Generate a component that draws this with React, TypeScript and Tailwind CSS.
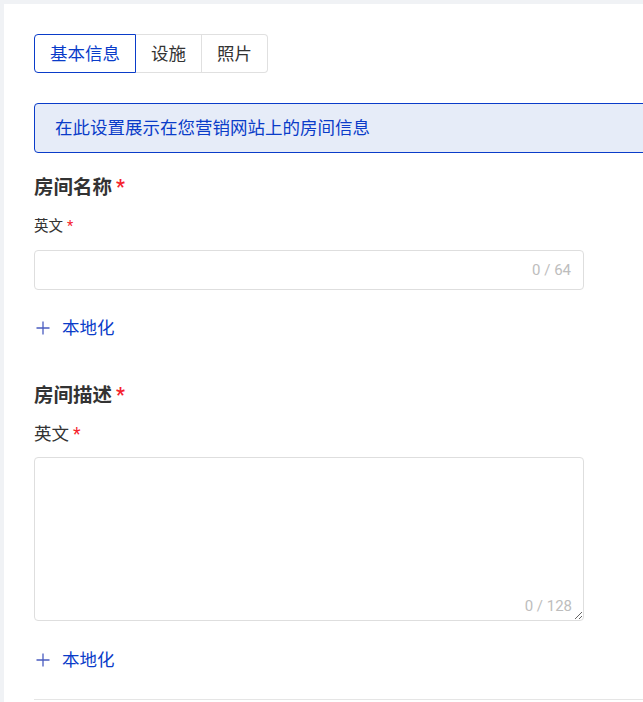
import React from 'react';

const font = { fontFamily: 'Roboto, "Noto Sans CJK SC", sans-serif' };

const Required = () => <span className="ml-1 text-[#f5222d]">*</span>;

const Localize: React.FC<{ className?: string }> = ({ className }) => (
  <button className={`flex items-center text-[17.5px] leading-6 text-[#0a3cc9] ${className ?? ''}`}>
    <svg width="14" height="14" viewBox="0 0 14 14" className="ml-[2px] mr-[12px]">
      <path d="M7 0.5v13M0.5 7h13" stroke="#4a5cc0" strokeWidth="1.3" />
    </svg>
    本地化
  </button>
);

const App: React.FC = () => {
  return (
    <div className="h-[702px] w-[643px] overflow-hidden bg-[#f0f2f5] pl-1 pt-1" style={font}>
      <div className="h-full w-[720px] bg-white pl-[30px] pt-[30px] text-[#333]">
        {/* Tabs */}
        <div className="flex text-[17.5px] leading-[22px]">
          <div className="flex h-[39px] w-[102px] items-center justify-center rounded-l-[4px] border border-[#0a3cc9] text-[#0a3cc9]">
            基本信息
          </div>
          <div className="flex h-[39px] w-[66px] items-center justify-center border-y border-r border-[#e0e0e0]">
            设施
          </div>
          <div className="flex h-[39px] w-[66px] items-center justify-center rounded-r-[4px] border-y border-r border-[#e0e0e0]">
            照片
          </div>
        </div>

        {/* Info banner */}
        <div className="mt-[30px] flex h-[50px] items-center rounded-l-[4px] border border-[#0a3cc9] bg-[#e6ecf8] pl-[20px] text-[17.5px] text-[#0a3cc9]">
          在此设置展示在您营销网站上的房间信息
        </div>

        {/* Room name */}
        <h3 className="mt-[22px] text-[19.5px] font-bold leading-[26px] text-[#333]">
          房间名称<Required />
        </h3>
        <label className="mt-[16px] block text-[14.5px] leading-5 text-[#333]">
          英文<Required />
        </label>
        <div className="relative mt-[13px] w-[550px]">
          <input
            type="text"
            className="block h-[40px] w-full rounded-[4px] border border-[#dedede] px-3 text-[14px] outline-none"
          />
          <span className="absolute right-[13px] top-1/2 -translate-y-1/2 text-[15px] text-[#bdbdbd]">
            0 / 64
          </span>
        </div>
        <Localize className="mt-[26px]" />

        {/* Room description */}
        <h3 className="mt-[43px] text-[19.5px] font-bold leading-[26px] text-[#333]">
          房间描述<Required />
        </h3>
        <label className="mt-[13px] block text-[17.5px] leading-6 text-[#333]">
          英文<Required />
        </label>
        <div className="relative mt-[11px] w-[550px]">
          <textarea className="block h-[164px] w-full rounded-[4px] border border-[#dedede] px-3 py-2 text-[14px] outline-none" />
          <span className="absolute bottom-[4px] right-[12px] text-[15px] text-[#bdbdbd]">
            0 / 128
          </span>
        </div>
        <Localize className="mt-[27px]" />

        <div className="mt-[27px] border-t border-[#e5e5e5]" />
      </div>
    </div>
  );
};

export default App;
